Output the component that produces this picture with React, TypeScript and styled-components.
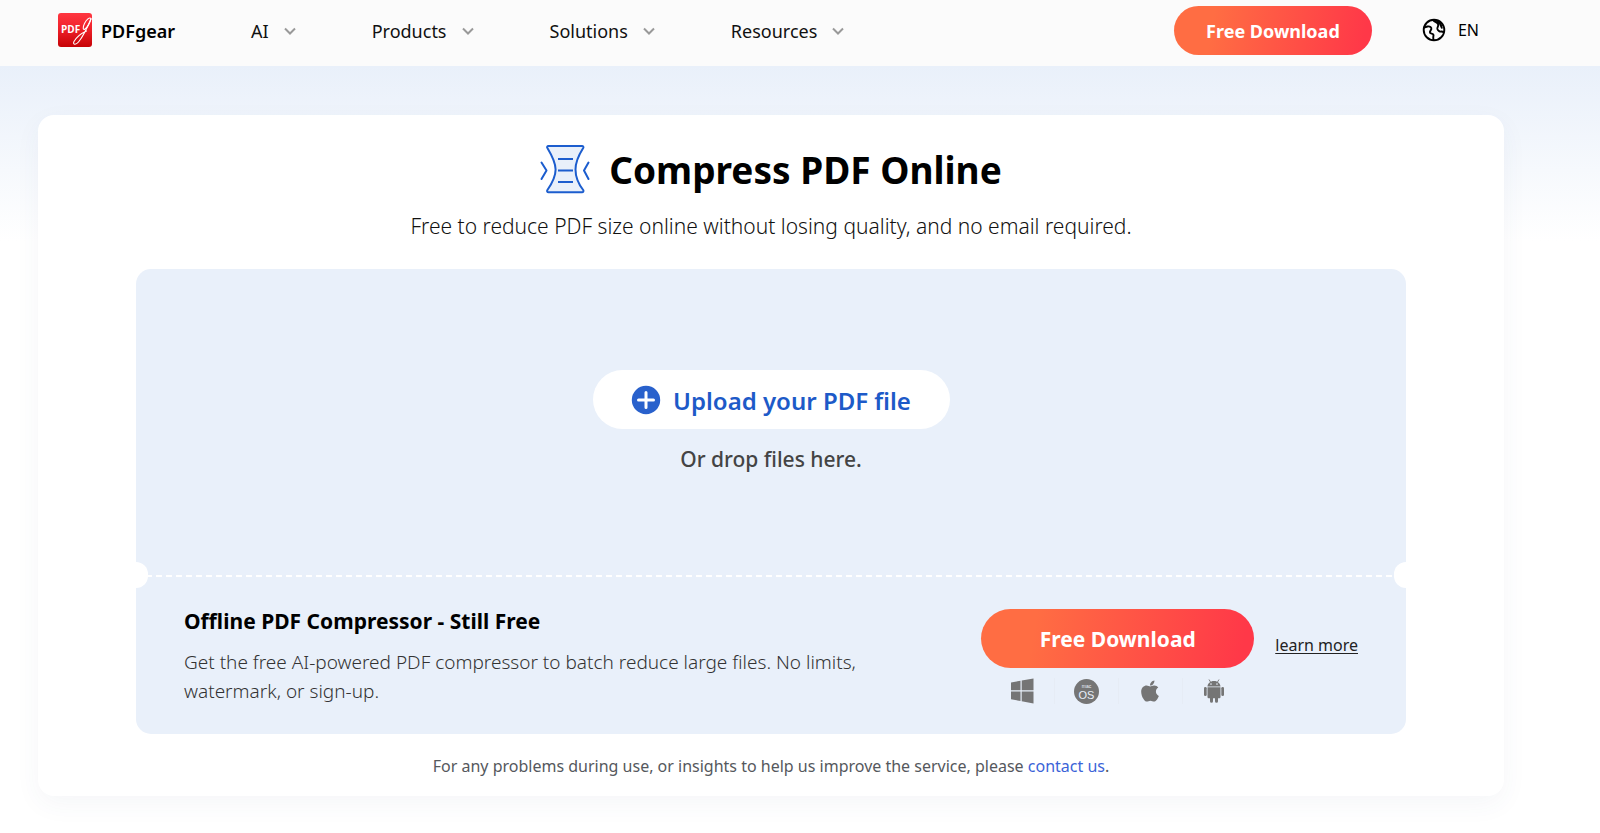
import React from 'react';
import styled, { createGlobalStyle } from 'styled-components';
import { FaApple } from 'react-icons/fa';

const GlobalStyle = createGlobalStyle`
  *, *::before, *::after { box-sizing: border-box; }
  body {
    margin: 0;
    background: #fff;
    color: #000;
    font-family: 'Segoe UI', 'Noto Sans', 'Open Sans', sans-serif;
    font-size: 18px;
  }
  button { font-family: inherit; border: 0; padding: 0; cursor: pointer; }
  a { color: inherit; }
  h1, h2, p { margin: 0; }
`;

const Page = styled.div`
  background: linear-gradient(#e9f0fa, #fff 175px) 0 66px no-repeat;
  padding-bottom: 36px;
`;

const Header = styled.header`
  display: flex;
  align-items: center;
  height: 66px;
  padding: 0 121px 6px 58px;
  background: #fbfbfb;
`;

const Brand = styled.a`
  display: flex;
  align-items: center;
  gap: 9px;
  margin-right: 76px;
  color: #000;
  font-weight: 600;
  text-decoration: none;
`;

const BrandName = styled.span`
  padding-top: 2px;
`;

const Nav = styled.nav`
  display: flex;
  gap: 76px;
`;

const NavItem = styled.button`
  display: flex;
  align-items: center;
  gap: 15px;
  padding-top: 2px;
  background: none;
  color: #111;
  font-size: 18px;
  line-height: 26px;
`;

const HeaderActions = styled.div`
  display: flex;
  align-items: center;
  gap: 50px;
  margin-left: auto;
`;

const DownloadButton = styled.button<{ $large?: boolean }>`
  width: ${({ $large }) => ($large ? '273px' : '198px')};
  height: ${({ $large }) => ($large ? '59px' : '49px')};
  padding-top: 1px;
  border-radius: 30px;
  background: linear-gradient(100deg, #ff6d43 20%, #ff3848 95%);
  color: #fff;
  font-size: ${({ $large }) => ($large ? '21px' : '18px')};
  font-weight: 700;
`;

const Language = styled.button`
  display: flex;
  align-items: center;
  gap: 12px;
  background: none;
  color: #000;
  font-size: 16px;
`;

const Card = styled.main`
  margin: 49px 96px 0 38px;
  padding: 29px 98px 18px;
  border-radius: 16px;
  background: #fff;
  box-shadow: 0 8px 26px rgba(60, 80, 110, 0.05);
`;

const TitleRow = styled.div`
  display: flex;
  align-items: center;
  justify-content: center;
  gap: 19px;
`;

const Title = styled.h1`
  padding-top: 2px;
  font-size: 37px;
  font-weight: 700;
  line-height: 48px;
`;

const Subtitle = styled.p`
  margin: 17px 0 28px;
  color: #111;
  font-size: 21px;
  font-weight: 350;
  line-height: 30px;
  text-align: center;
`;

const Panel = styled.section`
  border-radius: 15px;
  background: #e9f0fa;
`;

const DropZone = styled.div`
  display: flex;
  flex-direction: column;
  align-items: center;
  gap: 15px;
  padding: 101px 0;
`;

const UploadButton = styled.button`
  display: flex;
  align-items: center;
  justify-content: center;
  gap: 12px;
  width: 357px;
  height: 59px;
  border-radius: 30px;
  background: #fff;
  color: #1d5ac8;
  font-size: 24px;
  font-weight: 600;
`;

const UploadLabel = styled.span`
  padding-top: 2px;
`;

const DropHint = styled.p`
  color: #444;
  font-size: 21px;
  font-weight: 500;
  line-height: 30px;
`;

const Perforation = styled.div`
  position: relative;
  height: 2px;
  background: repeating-linear-gradient(90deg, #fff 0 6px, transparent 6px 10px);

  &::before,
  &::after {
    content: '';
    position: absolute;
    top: -13px;
    width: 12px;
    height: 26px;
    background: #fff;
  }
  &::before { left: 0; border-radius: 0 13px 13px 0; }
  &::after { right: 0; border-radius: 13px 0 0 13px; }
`;

const Offline = styled.div`
  display: flex;
  align-items: center;
  justify-content: space-between;
  padding: 30px 48px 28px;
`;

const OfflineText = styled.div`
  max-width: 720px;
`;

const OfflineTitle = styled.h2`
  font-size: 21px;
  font-weight: 700;
  line-height: 28px;
`;

const OfflineBody = styled.p`
  margin-top: 13px;
  color: #333;
  font-size: 19px;
  font-weight: 300;
  line-height: 29px;
`;

const OfflineActions = styled.div`
  display: flex;
  align-items: flex-start;
  gap: 21px;
`;

const Platforms = styled.ul`
  display: flex;
  justify-content: center;
  margin: 10px 0 0;
  padding: 0;
  list-style: none;
`;

const Platform = styled.li`
  display: flex;
  align-items: center;
  justify-content: center;
  width: 64px;
  height: 26px;
  color: #757575;

  & + & { border-left: 1px solid #e6ecf5; }
`;

const LearnMore = styled.a`
  margin-top: 24px;
  color: #222;
  font-size: 16px;
  line-height: 24px;
  text-underline-offset: 2px;
`;

const Contact = styled.p`
  margin-top: 20px;
  color: #55585d;
  font-size: 16px;
  line-height: 24px;
  text-align: center;

  a { color: #3b63d8; text-decoration: none; }
`;

const Logo = () => (
  <svg width="34" height="34" viewBox="0 0 34 34" aria-hidden="true">
    <defs>
      <linearGradient id="logo-red" x1="0" y1="0" x2="0" y2="1">
        <stop offset="0" stopColor="#ff3640" />
        <stop offset="0.45" stopColor="#f0222b" />
        <stop offset="1" stopColor="#c60206" />
      </linearGradient>
    </defs>
    <rect width="34" height="34" rx="3" fill="url(#logo-red)" />
    <text x="3" y="20" fill="#fff" fontSize="10" fontWeight="700" fontFamily="Open Sans, sans-serif">PDF</text>
    <g fill="none" stroke="#fff" strokeLinecap="round" strokeLinejoin="round">
      <path strokeWidth="1.1" d="M33 5.500C31.500 4 28.500 6.500 26.500 10.500C24.500 14.500 25 17.500 27 16C29.500 14 32 9.500 33 5.500" />
      <path strokeWidth="1.1" d="M33 6C30 13 25.500 23 20.500 29C17.500 32.500 14.500 31.500 16 28.500C18 25 23 20.500 28.500 18" />
    </g>
  </svg>
);

const Chevron = () => (
  <svg width="12" height="8" viewBox="0 0 12 8" aria-hidden="true">
    <path d="M1 1.500L6 6.500L11 1.500" fill="none" stroke="#999" strokeWidth="2" />
  </svg>
);

const Globe = () => (
  <svg width="24" height="24" viewBox="0 0 24 24" fill="none" stroke="#000" strokeWidth="1.900" strokeLinecap="round" strokeLinejoin="round" aria-hidden="true">
    <circle cx="12" cy="12" r="10.300" />
    <path d="M2 9.500L5.500 8.500C8 8 9.800 9.500 9.300 11.300C8.500 12.800 7.500 13.500 8 14.800C8.800 16 11.200 15.200 11.500 17C11.500 18.500 10.800 19.500 11.500 21.800" />
    <path d="M11.500 2.500C13 4 15.600 4.500 16.200 6.500C16.600 8.500 15 9.200 15.400 11C16 13 18 14 19.500 13.500L21.500 14M15.500 3C18 4.800 19.300 7 19.800 9.800" />
  </svg>
);

const CompressIcon = () => (
  <svg width="50" height="50" viewBox="0 0 50 50" fill="none" stroke="#1c5dce" strokeWidth="2" strokeLinecap="round" strokeLinejoin="round" aria-hidden="true">
    <path fill="#e9f0fa" d="M8.500 2H42C43.300 2 43.800 3 43.200 4C37.500 13 35.500 19 35.500 25.500C35.500 33 38.500 40 43.200 46C43.900 47.200 43.300 48.300 42 48.300H8.500C7.200 48.300 6.700 47.200 7.400 46C13 38 15.600 32 15.600 25.500C15.600 19 12.500 12.500 7.400 4C6.700 3 7.200 2 8.500 2Z" />
    <path strokeLinecap="butt" d="M18 15H33M18 26.500H33M18 38H33" />
    <path d="M1.500 18.500L6.500 26.500L1.500 35M48.500 18.500L44 26.500L48.500 35" />
  </svg>
);

const PlusIcon = () => (
  <svg width="30" height="30" viewBox="0 0 30 30" aria-hidden="true">
    <circle cx="15" cy="15" r="14.200" fill="#2961cc" />
    <path d="M15 7.500V22.500M7.500 15H22.500" stroke="#fff" strokeWidth="3" strokeLinecap="round" />
  </svg>
);

const WindowsIcon = () => (
  <svg width="24" height="26" viewBox="0 0 24 26" fill="currentColor" aria-hidden="true">
    <path d="M1 4.500L10.500 2.700V12.300H1ZM11.700 2.500L23.500 0.500V12.300H11.700ZM1 13.500H10.500V23L1 21.300ZM11.700 13.500H23.500V25.500L11.700 23.300Z" />
  </svg>
);

const MacOsIcon = () => (
  <svg width="25" height="25" viewBox="0 0 25 25" aria-hidden="true">
    <circle cx="12.500" cy="12.500" r="12.500" fill="currentColor" />
    <g fill="#e9f0fa" textAnchor="middle" fontFamily="Liberation Sans, sans-serif">
      <text x="12.500" y="9" fontSize="5">mac</text>
      <text x="12.500" y="19.500" fontSize="11">OS</text>
    </g>
  </svg>
);

const AndroidIcon = () => (
  <svg width="22" height="24" viewBox="0 0 22 24" fill="currentColor" aria-hidden="true">
    <path d="M6 0.500L7.500 3M16 0.500L14.500 3" stroke="currentColor" strokeWidth="0.900" />
    <path fillRule="evenodd" d="M4.500 7.500C4.500 4.500 7.200 2 11 2S17.500 4.500 17.500 7.500ZM8 4.300a.8.8 0 1 0 0 1.600a.8.8 0 1 0 0-1.600ZM14 4.300a.8.800 0 1 0 0 1.600a.8.8 0 1 0 0-1.600Z" />
    <path d="M4.500 8.300H17.500V18a1.200 1.200 0 0 1-1.200 1.200H15V22.300a1.500 1.500 0 0 1-3 0V19.200H10V22.300a1.500 1.500 0 0 1-3 0V19.200H5.700A1.200 1.200 0 0 1 4.500 18Z" />
    <rect x="1" y="8" width="2.700" height="9" rx="1.350" />
    <rect x="18.300" y="8" width="2.700" height="9" rx="1.350" />
  </svg>
);

const menus = ['AI', 'Products', 'Solutions', 'Resources'];

export default function App() {
  return (
    <Page>
      <GlobalStyle />
      <Header>
        <Brand href="#">
          <Logo />
          <BrandName>PDFgear</BrandName>
        </Brand>
        <Nav>
          {menus.map((menu) => (
            <NavItem key={menu} type="button">
              {menu}
              <Chevron />
            </NavItem>
          ))}
        </Nav>
        <HeaderActions>
          <DownloadButton type="button">Free Download</DownloadButton>
          <Language type="button">
            <Globe />
            EN
          </Language>
        </HeaderActions>
      </Header>

      <Card>
        <TitleRow>
          <CompressIcon />
          <Title>Compress PDF Online</Title>
        </TitleRow>
        <Subtitle>Free to reduce PDF size online without losing quality, and no email required.</Subtitle>

        <Panel>
          <DropZone>
            <UploadButton type="button">
              <PlusIcon />
              <UploadLabel>Upload your PDF file</UploadLabel>
            </UploadButton>
            <DropHint>Or drop files here.</DropHint>
          </DropZone>
          <Perforation />
          <Offline>
            <OfflineText>
              <OfflineTitle>Offline PDF Compressor - Still Free</OfflineTitle>
              <OfflineBody>
                Get the free AI-powered PDF compressor to batch reduce large files. No limits, watermark, or sign-up.
              </OfflineBody>
            </OfflineText>
            <OfflineActions>
              <div>
                <DownloadButton type="button" $large>Free Download</DownloadButton>
                <Platforms>
                  <Platform><WindowsIcon /></Platform>
                  <Platform><MacOsIcon /></Platform>
                  <Platform><FaApple size={24} /></Platform>
                  <Platform><AndroidIcon /></Platform>
                </Platforms>
              </div>
              <LearnMore href="#">learn more</LearnMore>
            </OfflineActions>
          </Offline>
        </Panel>

        <Contact>
          For any problems during use, or insights to help us improve the service, please <a href="#">contact us</a>.
        </Contact>
      </Card>
    </Page>
  );
}
